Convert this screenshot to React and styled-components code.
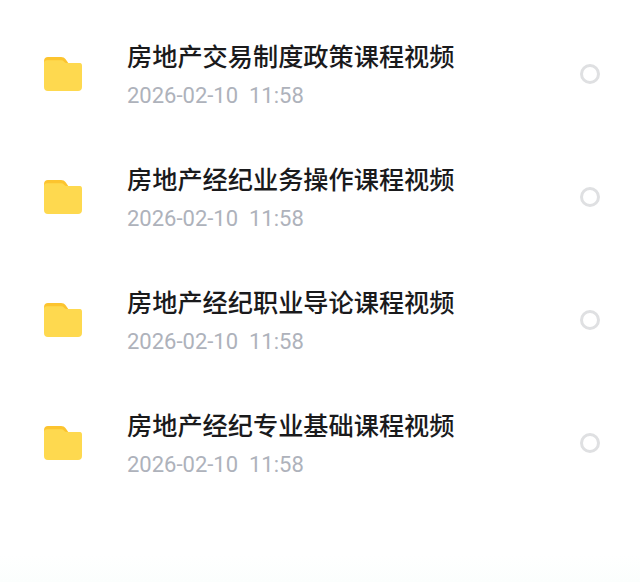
import React from "react";
import styled, { createGlobalStyle } from "styled-components";

const Global = createGlobalStyle`
  html, body { margin: 0; padding: 0; background: #fff; }
  body { font-family: "Noto Sans CJK SC", "Roboto", sans-serif; }
`;

const Page = styled.div`
  width: 640px;
  height: 582px;
  overflow: hidden;
  box-sizing: border-box;
  padding-top: 33.5px;
  background: linear-gradient(to bottom, #ffffff 0, #ffffff 555px, #fbfefd 582px);
`;

const List = styled.div`
  display: flex;
  flex-direction: column;
  gap: 40px;
`;

const Row = styled.div`
  display: flex;
  align-items: center;
  height: 82.8px;
  padding-left: 43px;
  padding-right: 40px;
`;

const FolderSlot = styled.div`
  flex: none;
  width: 84px;
  display: flex;
  align-items: center;
  margin-bottom: 1px;
`;

const Info = styled.div`
  flex: 1;
  min-width: 0;
  display: flex;
  flex-direction: column;
  gap: 13px;
`;

const Title = styled.div`
  font-family: "Noto Sans CJK SC", sans-serif;
  font-size: 25.2px;
  font-weight: 500;
  line-height: 30px;
  color: #1a1a1c;
  white-space: nowrap;
`;

const Stamp = styled.div`
  font-family: "Roboto", sans-serif;
  font-size: 22px;
  line-height: 26px;
  color: #aeb2bb;
  white-space: pre;
`;

const Radio = styled.div`
  flex: none;
  width: 20px;
  height: 20px;
  box-sizing: border-box;
  border: 3px solid #dfe0e2;
  border-radius: 50%;
  margin-bottom: 1px;
`;

const Folder = () => (
  <svg width="40" height="36" viewBox="0 0 40 36">
    <path d="M1 5C1 2.6 2.6 1 5 1h13c2 0 3.400.8 4.600 2.200L26 8H1z" fill="#fcc42f" />
    <path d="M1 7c0-2 1.200-2.800 3-2.800h14.500c1.800 0 3 2.300 4.500 2.800h14c1.600 0 2 1.400 2 3v21c0 2.600-1.400 4-4 4H5c-2.600 0-4-1.400-4-4z" fill="#fed94f" />
  </svg>
);

const items = [
  "房地产交易制度政策课程视频",
  "房地产经纪业务操作课程视频",
  "房地产经纪职业导论课程视频",
  "房地产经纪专业基础课程视频",
];

export default function App() {
  return (
    <Page>
      <Global />
      <List>
        {items.map((t) => (
          <Row key={t}>
            <FolderSlot><Folder /></FolderSlot>
            <Info>
              <Title>{t}</Title>
              <Stamp>2026-02-10  11:58</Stamp>
            </Info>
            <Radio />
          </Row>
        ))}
      </List>
    </Page>
  );
}
